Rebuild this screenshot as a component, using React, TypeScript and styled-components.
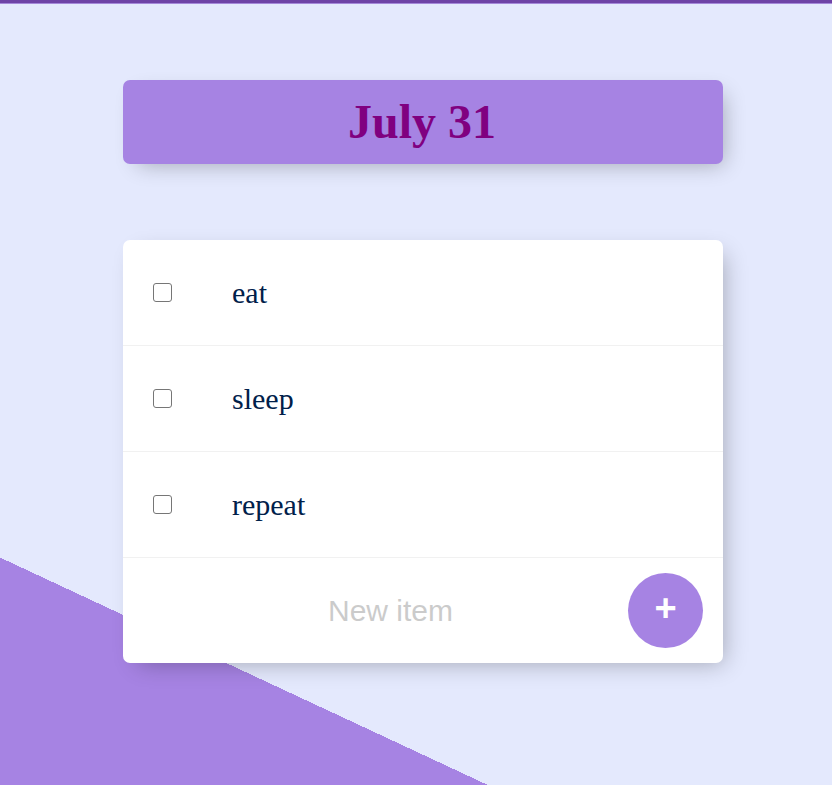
import * as React from "react";
import styled, { createGlobalStyle } from "styled-components";

const GlobalStyle = createGlobalStyle`
  html, body {
    margin: 0;
    padding: 0;
  }
  body {
    background: #e4e9fd;
  }
`;

const Page = styled.div`
  min-height: 1500px;
  box-sizing: border-box;
  padding: 77px 0 0 14px;
  border-top: 3px solid #6e43a6;
  background-image: linear-gradient(25deg, #a683e3 50%, #e4e9fd 50%);
  position: relative;

  &::before {
    content: "";
    position: absolute;
    left: 0;
    right: 0;
    top: 0;
    height: 1px;
    background: #a487da;
  }
`;

const Box = styled.div`
  width: 600px;
  margin: 0 auto 76px;
  background: #ffffff;
  border-radius: 7px;
  box-shadow: 7.5px 7.5px 22.5px -7.5px rgba(0, 0, 0, 0.3);
`;

const Heading = styled(Box)`
  background: #a683e3;
  text-align: center;
`;

const Title = styled.h1`
  margin: 0;
  padding: 15px 15px 15px 13px;
  font-family: "Liberation Serif", "Times New Roman", serif;
  font-size: 48px;
  font-weight: 700;
  line-height: 54px;
  color: #800080;
`;

const Item = styled.div`
  min-height: 105px;
  display: flex;
  align-items: center;
  border-bottom: 1px solid #f1f1f1;

  &:last-child {
    border-bottom: 0;
  }
`;

const Check = styled.input`
  appearance: none;
  box-sizing: border-box;
  width: 19px;
  height: 19px;
  margin: 30px;
  flex-shrink: 0;
  border: 1.5px solid #767676;
  border-radius: 3px;
  background: #ffffff;

  &:checked {
    background: #a683e3;
    border-color: #a683e3;
  }
`;

const Label = styled.p`
  margin: 0;
  padding: 30px;
  font-family: "Liberation Serif", "Times New Roman", serif;
  font-size: 30px;
  font-weight: 200;
  color: #00204a;
`;

const Form = styled.form`
  display: flex;
  align-items: center;
  width: 100%;
  padding-left: 30px;
  min-height: 105px;
`;

const TextInput = styled.input`
  flex: 1;
  min-width: 0;
  height: 90px;
  border: none;
  padding: 0;
  text-align: center;
  font-family: "Liberation Sans", Arial, sans-serif;
  font-size: 30px;
  font-weight: 200;
  background: transparent;

  &:focus {
    outline: none;
    box-shadow: inset 0 -3px 0 0 #a683e3;
  }

  &::placeholder {
    color: grey;
    opacity: 0.4;
  }
`;

const AddButton = styled.button`
  width: 75px;
  height: 75px;
  margin-right: 20px;
  flex-shrink: 0;
  border-radius: 50%;
  border: 0;
  background: #a683e3;
  color: #ffffff;
  font-family: "Liberation Sans", Arial, sans-serif;
  font-size: 38px;
  font-weight: 700;
  line-height: 1;
  padding: 0 0 6px;
  cursor: pointer;
`;

const items = ["eat", "sleep", "repeat"];

const App: React.FC = () => (
  <>
    <GlobalStyle />
    <Page>
      <Heading>
        <Title>July 31</Title>
      </Heading>
      <Box>
        {items.map(name => (
          <Item key={name}>
            <Check type="checkbox" />
            <Label>{name}</Label>
          </Item>
        ))}
        <Item>
          <Form onSubmit={e => e.preventDefault()}>
            <TextInput type="text" placeholder="New item" autoComplete="off" />
            <AddButton type="submit">+</AddButton>
          </Form>
        </Item>
      </Box>
    </Page>
  </>
);

export default App;
